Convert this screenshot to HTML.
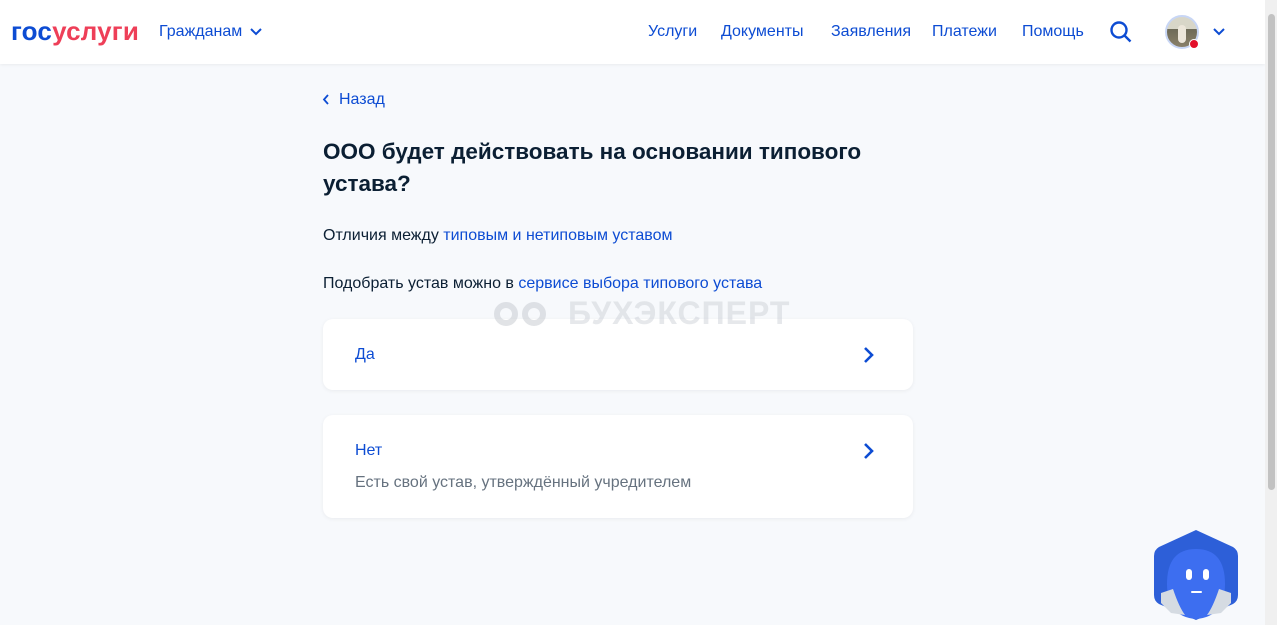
<!DOCTYPE html>
<html><head><meta charset="utf-8"><style>
*{margin:0;padding:0;box-sizing:border-box}
body{width:1277px;height:625px;overflow:hidden;background:#f7f9fc;font-family:"Liberation Sans",sans-serif;color:#0b1f33;position:relative}
.hdr{position:absolute;left:0;top:0;width:1265px;height:64px;background:#fff;box-shadow:0 1px 3px rgba(0,0,0,.06)}
.logo{position:absolute;left:11px;top:16px;font-size:26px;font-weight:bold;letter-spacing:0.2px}
.logo .a{color:#0d4cd3}.logo .b{color:#ee3f58}
.nav{position:absolute;top:23px;font-size:16px;color:#0d4cd3}
.scroll{position:absolute;right:0;top:0;width:12px;height:625px;background:#f0f0f0}
.scroll div{position:absolute;left:3px;top:14px;width:7px;height:476px;background:#c2c2c2;border-radius:4px}
a{color:#0d4cd3;text-decoration:none}
.card{position:absolute;left:323px;width:590px;background:#fff;border-radius:10px;box-shadow:0 1px 4px rgba(0,0,0,.06)}
.wm{position:absolute;left:568px;top:295px;font-size:32px;font-weight:bold;color:rgba(200,204,210,.45);letter-spacing:1px;z-index:5}
</style></head><body>
<div class="hdr">
<div class="logo"><span class="a">гос</span><span class="b">услуги</span></div>
<div class="nav" style="left:159px">Гражданам</div>
<svg style="position:absolute;left:250px;top:28px" width="12" height="8"><path d="M1 1l5 5 5-5" stroke="#0d4cd3" stroke-width="2" fill="none"/></svg>
<div class="nav" style="left:648px">Услуги</div>
<div class="nav" style="left:721px">Документы</div>
<div class="nav" style="left:831px">Заявления</div>
<div class="nav" style="left:932px">Платежи</div>
<div class="nav" style="left:1022px">Помощь</div>
<svg style="position:absolute;left:1109px;top:20px" width="24" height="24"><circle cx="10" cy="10" r="7.5" stroke="#0d4cd3" stroke-width="2.4" fill="none"/><path d="M15.5 15.5l6 6" stroke="#0d4cd3" stroke-width="2.4"/></svg>
<div style="position:absolute;left:1165px;top:15px;width:34px;height:34px;border-radius:50%;border:2px solid #c8d6f5;background:linear-gradient(#d8d6c8 0 40%,#6d6a58 40%,#8a8068 100%)"><div style="position:absolute;left:11px;top:8px;width:8px;height:18px;border-radius:4px;background:#ece6da"></div></div>
<div style="position:absolute;left:1189px;top:39px;width:10px;height:10px;border-radius:50%;background:#e3102a;border:1px solid #fff"></div>
<svg style="position:absolute;left:1213px;top:28px" width="12" height="8"><path d="M1 1l5 5 5-5" stroke="#0d4cd3" stroke-width="2" fill="none"/></svg>
</div>
<div class="scroll"><div></div></div>
<svg style="position:absolute;left:322px;top:94px" width="8" height="12"><path d="M6 1L2 5.5 6 10" stroke="#0d4cd3" stroke-width="1.8" fill="none"/></svg>
<a style="position:absolute;left:339px;top:91px;font-size:16px">Назад</a>
<div style="position:absolute;left:323px;top:136px;font-size:22.5px;font-weight:bold;line-height:32px;width:600px">ООО будет действовать на основании типового устава?</div>
<div style="position:absolute;left:323px;top:227px;font-size:16px">Отличия между <a>типовым и нетиповым уставом</a></div>
<div style="position:absolute;left:323px;top:275px;font-size:16px">Подобрать устав можно в <a>сервисе выбора типового устава</a></div>
<svg style="position:absolute;left:492px;top:297px;z-index:5" width="60" height="32"><g fill="none" stroke="rgba(200,204,210,.55)" stroke-width="6"><circle cx="14" cy="17" r="9"/><circle cx="42" cy="17" r="9"/></g></svg>
<div class="wm">БУХЭКСПЕРТ</div>
<div class="card" style="top:319px;height:71px"><a style="position:absolute;left:32px;top:27px;font-size:16px">Да</a>
<svg style="position:absolute;left:540px;top:27px" width="12" height="18"><path d="M2 2l7 7-7 7" stroke="#0d4cd3" stroke-width="2.6" fill="none"/></svg></div>
<div class="card" style="top:415px;height:103px"><a style="position:absolute;left:32px;top:27px;font-size:16px">Нет</a>
<div style="position:absolute;left:32px;top:59px;font-size:16px;color:#66727f">Есть свой устав, утверждённый учредителем</div>
<svg style="position:absolute;left:540px;top:27px" width="12" height="18"><path d="M2 2l7 7-7 7" stroke="#0d4cd3" stroke-width="2.6" fill="none"/></svg></div>
<svg style="position:absolute;left:1153px;top:529px" width="86" height="92" viewBox="0 0 86 92">
<path d="M43 1L80 18Q85 21 85 27V66Q85 72 80 75L43 91 6 75Q1 72 1 66V27Q1 21 6 18Z" fill="#2d5fd8"/>
<path d="M14 55Q14 20 43 20Q72 20 72 55Q72 88 43 90Q14 88 14 55Z" fill="#3d6ef0"/>
<path d="M8 64L20 60Q26 78 32 86L18 84 8 74Z" fill="#d5dbe2"/>
<path d="M78 64L66 60Q60 78 54 86L68 84 78 74Z" fill="#d5dbe2"/>
<rect x="33" y="40" width="6" height="11" rx="3" fill="#fff"/><rect x="50" y="40" width="6" height="11" rx="3" fill="#fff"/>
<rect x="38" y="62" width="11" height="2" rx="1" fill="#fff"/>
</svg>
</body></html>
